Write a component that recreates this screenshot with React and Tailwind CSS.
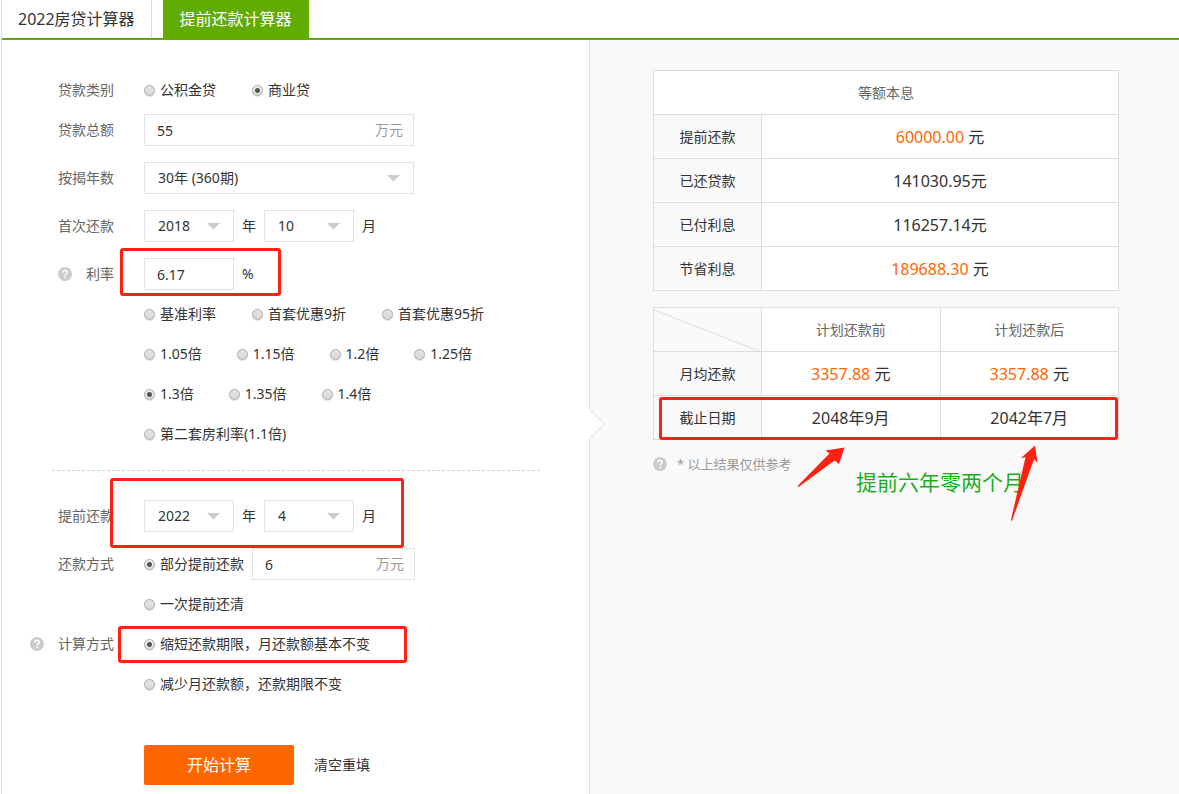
import React from "react";

function HelpIcon() {
  return (
    <svg className="size-3.5 shrink-0" viewBox="0 0 14 14" aria-hidden="true">
      <circle cx="7" cy="7" r="7" fill="#ccc" />
      <path
        d="M4.800 5.600C4.800 4.200 5.700 3.400 7 3.400s2.200.8 2.200 1.900c0 1.500-2.100 1.600-2.100 3.300"
        fill="none"
        stroke="#fff"
        strokeWidth="1.6"
      />
      <rect x="6.3" y="9.6" width="1.600" height="1.600" fill="#fff" />
    </svg>
  );
}

function Row({ label, help, className = "", children }) {
  return (
    <div className={`flex gap-[30px] ${className}`}>
      <div className="flex h-8 w-28 shrink-0 items-center justify-end gap-3.5 whitespace-nowrap text-[#666]">
        {help && <HelpIcon />}
        {label && <span>{label}</span>}
      </div>
      {children}
    </div>
  );
}

function Radio({ name, label, checked }) {
  return (
    <label className="flex h-8 items-center gap-[5px] whitespace-nowrap">
      <input
        type="radio"
        name={name}
        defaultChecked={checked}
        className="size-[11px] shrink-0 appearance-none rounded-full border border-[#aaa] bg-[linear-gradient(#e6e6e6,#d8d8d8)] shadow-[0_1px_1px_#0000001a] checked:bg-[radial-gradient(circle,#555_0_2px,transparent_3px),linear-gradient(#f0f0f0,#dedede)]"
      />
      <span>{label}</span>
    </label>
  );
}

function RadioLine({ name, options, gap = "gap-[35px]" }) {
  return (
    <div className={`flex h-10 items-center ${gap}`}>
      {options.map(([label, checked]) => (
        <Radio key={label} name={name} label={label} checked={checked} />
      ))}
    </div>
  );
}

function Field({ label, value, suffix, className }) {
  return (
    <div
      className={`flex h-8 items-center border border-[#e1e1e1] bg-white pr-2.5 pl-3 ${className}`}
    >
      <input
        type="text"
        aria-label={label}
        defaultValue={value}
        className="h-full w-full min-w-0 flex-1 bg-transparent outline-none"
      />
      {suffix && <span className="shrink-0 text-[#999]">{suffix}</span>}
    </div>
  );
}

function Select({ label, value, className }) {
  return (
    <div className={`relative h-8 ${className}`}>
      <select
        aria-label={label}
        defaultValue={value}
        className="h-full w-full appearance-none border border-[#e1e1e1] bg-white pl-[13px] outline-none"
      >
        <option>{value}</option>
      </select>
      <svg
        className="pointer-events-none absolute top-[13px] right-3.5 h-[7px] w-[13px]"
        viewBox="0 0 13 7"
        aria-hidden="true"
      >
        <path d="M0 0h13L6.500 6.500z" fill="#ccc" />
      </svg>
    </div>
  );
}

function YearMonth({ name, year, month }) {
  return (
    <div className="flex items-center gap-2">
      <Select label={`${name}年`} value={year} className="w-[90px]" />
      <span>年</span>
      <Select label={`${name}月`} value={month} className="w-[90px]" />
      <span>月</span>
    </div>
  );
}

function Mark({ className }) {
  return (
    <div
      className={`pointer-events-none absolute rounded-[3px] border-3 border-[#ff2012] ${className}`}
    />
  );
}

const head = "border border-[#ddd] bg-white text-sm font-normal text-[#666]";
const side = "border border-[#ddd] bg-[#f9f9f9] text-sm font-normal";
const cell = "border border-[#ddd] bg-white text-base";

function Amount({ value }) {
  return (
    <>
      <span className="text-[#f60]">{value}</span> 元
    </>
  );
}

function LoanForm() {
  return (
    <form
      className="w-[587px] shrink-0 pt-[30px] pb-2"
      onSubmit={(e) => e.preventDefault()}
    >
      <Row label="贷款类别" className="h-10 items-center">
        <RadioLine
          name="type"
          gap="gap-9"
          options={[["公积金贷"], ["商业贷", true]]}
        />
      </Row>
      <div className="mt-1 flex flex-col gap-4">
        <Row label="贷款总额">
          <Field label="贷款总额" value="55" suffix="万元" className="w-[270px]" />
        </Row>
        <Row label="按揭年数">
          <Select label="按揭年数" value="30年 (360期)" className="w-[270px]" />
        </Row>
        <Row label="首次还款">
          <YearMonth name="首次还款" year="2018" month="10" />
        </Row>
        <Row label="利率" help>
          <div className="relative flex items-center gap-2">
            <Field label="利率" value="6.17" className="w-[90px]" />
            <span>%</span>
            <Mark className="-top-2.5 -left-6 h-12 w-[161px]" />
          </div>
        </Row>
      </div>
      <Row className="mt-1">
        <div>
          <RadioLine
            name="rate"
            gap="gap-9"
            options={[["基准利率"], ["首套优惠9折"], ["首套优惠95折"]]}
          />
          <RadioLine
            name="rate"
            options={[["1.05倍"], ["1.15倍"], ["1.2倍"], ["1.25倍"]]}
          />
          <RadioLine
            name="rate"
            options={[["1.3倍", true], ["1.35倍"], ["1.4倍"]]}
          />
          <RadioLine name="rate" options={[["第二套房利率(1.1倍)"]]} />
        </div>
      </Row>
      <svg className="mt-4 mr-12 ml-[50px] h-px w-[488px]" aria-hidden="true">
        <line x2="488" y1="0.5" y2="0.5" stroke="#d4d4d4" strokeDasharray="3 2" />
      </svg>
      <div className="mt-[29px] flex flex-col gap-4">
        <Row label="提前还款">
          <div className="relative">
            <YearMonth name="提前还款" year="2022" month="4" />
            <Mark className="-top-[22px] -left-[34px] h-[70px] w-[294px]" />
          </div>
        </Row>
        <Row label="还款方式">
          <div className="flex items-center gap-2">
            <Radio name="mode" label="部分提前还款" checked />
            <Field
              label="提前还款金额"
              value="6"
              suffix="万元"
              className="w-[163px]"
            />
          </div>
        </Row>
      </div>
      <Row className="mt-1 h-10 items-center">
        <Radio name="mode" label="一次提前还清" />
      </Row>
      <Row label="计算方式" help className="h-10 items-center">
        <div className="relative">
          <Radio name="method" label="缩短还款期限，月还款额基本不变" checked />
          <Mark className="-top-0.5 -left-[26px] h-[37px] w-[289px]" />
        </div>
      </Row>
      <Row className="h-10 items-center">
        <Radio name="method" label="减少月还款额，还款期限不变" />
      </Row>
      <Row className="mt-[41px] h-10 items-center">
        <div className="flex items-center gap-5">
          <button
            type="submit"
            className="h-10 w-[150px] rounded-[2px] bg-[#f60] text-base text-white"
          >
            开始计算
          </button>
          <button type="reset">清空重填</button>
        </div>
      </Row>
    </form>
  );
}

function Results() {
  return (
    <section className="relative flex-1 border-l border-[#ddd] bg-[#f9f9f9] pt-[30px] pr-[60px] pl-[63px]">
      <svg
        className="absolute top-[369px] -left-px h-[30px] w-4"
        viewBox="0 0 16 30"
        aria-hidden="true"
      >
        <path d="M0 .5V29.500h.5L15 15 .5.5z" fill="#fff" />
        <path d="M.5.5L15 15 .5 29.500" fill="none" stroke="#ddd" />
      </svg>

      <table className="w-full table-fixed border-collapse text-center">
        <colgroup>
          <col className="w-[108px]" />
          <col />
        </colgroup>
        <thead>
          <tr className="h-11">
            <th colSpan={2} className={head}>
              等额本息
            </th>
          </tr>
        </thead>
        <tbody>
          <tr className="h-11">
            <th className={side}>提前还款</th>
            <td className={cell}>
              <Amount value="60000.00" />
            </td>
          </tr>
          <tr className="h-11">
            <th className={side}>已还贷款</th>
            <td className={cell}>141030.95元</td>
          </tr>
          <tr className="h-11">
            <th className={side}>已付利息</th>
            <td className={cell}>116257.14元</td>
          </tr>
          <tr className="h-11">
            <th className={side}>节省利息</th>
            <td className={cell}>
              <Amount value="189688.30" />
            </td>
          </tr>
        </tbody>
      </table>

      <div className="relative mt-4">
        <table className="w-full table-fixed border-collapse text-center">
          <colgroup>
            <col className="w-[108px]" />
            <col />
            <col />
          </colgroup>
          <thead>
            <tr className="h-11">
              <td className={side}>
                <svg
                  className="block h-[42px] w-full"
                  viewBox="0 0 107 42"
                  preserveAspectRatio="none"
                  aria-hidden="true"
                >
                  <path d="M0 1L105 42" stroke="#ddd" />
                </svg>
              </td>
              <th className={head}>计划还款前</th>
              <th className={head}>计划还款后</th>
            </tr>
          </thead>
          <tbody>
            <tr className="h-11">
              <th className={side}>月均还款</th>
              <td className={cell}>
                <Amount value="3357.88" />
              </td>
              <td className={cell}>
                <Amount value="3357.88" />
              </td>
            </tr>
            <tr className="h-11">
              <th className={side}>截止日期</th>
              <td className={cell}>2048年9月</td>
              <td className={cell}>2042年7月</td>
            </tr>
          </tbody>
        </table>
        <Mark className="top-[90px] right-px left-1.5 h-[43px]" />
        <p className="absolute top-[161px] left-[203px] text-[21px] leading-7 whitespace-nowrap text-[#1aad19]">
          提前六年零两个月
        </p>
        <svg
          className="pointer-events-none absolute top-[138px] left-[143px] h-20 w-[246px]"
          viewBox="796 445 246 80"
          aria-hidden="true"
        >
          <g fill="#ff2012">
            <path d="M844.500 447.500L825.500 450.500 829.500 453.500 797.500 486 798.500 487 834.500 460.500 839 464z" />
            <path d="M1035 445.500L1021 458 1025.500 457.300 1010.800 520.500 1012 520.800 1034 459.300 1037.500 463z" />
          </g>
        </svg>
      </div>

      <p className="mt-3 flex items-center gap-2.5 text-[13px] leading-6 text-[#999]">
        <HelpIcon />
        <span>* 以上结果仅供参考</span>
      </p>
    </section>
  );
}

export default function App() {
  return (
    <main className="ml-px flex min-h-screen flex-col border-l border-[#ddd] bg-white font-['Noto_Sans','Noto_Sans_CJK_SC',sans-serif] text-sm text-[#333]">
      <nav className="flex h-10 gap-[11px] border-b-2 border-[#62ab00] text-base leading-[38px]">
        <a href="#loan" className="border-r border-[#ddd] px-4">
          2022房贷计算器
        </a>
        <a href="#prepay" className="bg-[#62ab00] px-[17px] text-white">
          提前还款计算器
        </a>
      </nav>
      <div className="flex flex-1">
        <LoanForm />
        <Results />
      </div>
    </main>
  );
}
